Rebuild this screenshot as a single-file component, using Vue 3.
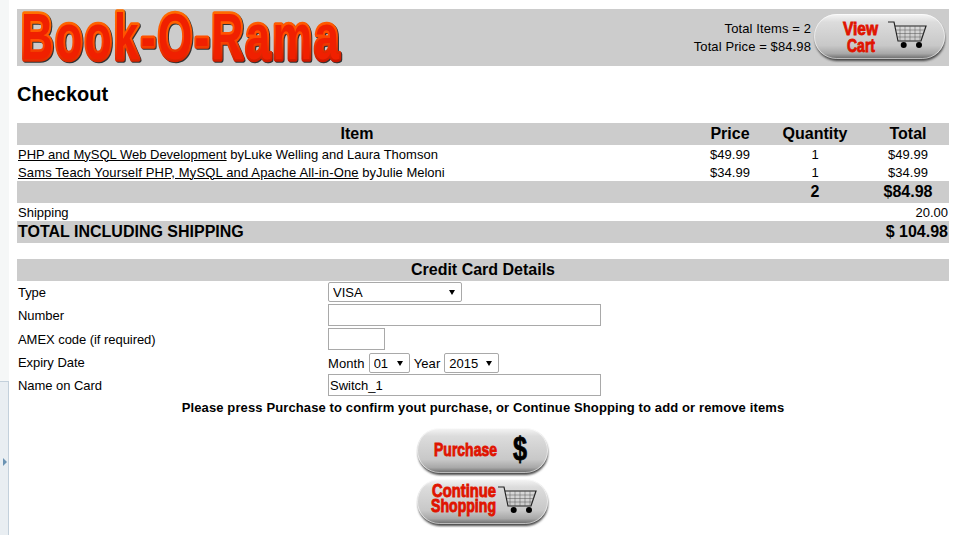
<script setup>
const items = [
  { title: "PHP and MySQL Web Development", author: "Luke Welling and Laura Thomson", price: "$49.99", qty: 1, total: "$49.99" },
  { title: "Sams Teach Yourself PHP, MySQL and Apache All-in-One", author: "Julie Meloni", price: "$34.99", qty: 1, total: "$34.99", wide: true },
];
</script>

<template>
  <div class="side-strip"><div class="side-panel"><span class="side-arrow"></span></div></div>

  <div class="page">
    <svg width="0" height="0" class="defs">
      <defs>
        <linearGradient id="pill" x1="0" y1="0" x2="0" y2="1">
          <stop offset="0" stop-color="#f6f6f6" />
          <stop offset="0.18" stop-color="#dcdcdc" />
          <stop offset="0.7" stop-color="#c8c8c8" />
          <stop offset="0.88" stop-color="#a8a8a8" />
          <stop offset="1" stop-color="#666" />
        </linearGradient>
        <linearGradient id="logoEdge" x1="0" y1="0" x2="0.15" y2="1">
          <stop offset="0" stop-color="#ff8000" />
          <stop offset="0.6" stop-color="#ff4c00" />
          <stop offset="1" stop-color="#c81000" />
        </linearGradient>
        <filter id="soft" x="-5%" y="-10%" width="110%" height="125%">
          <feGaussianBlur stdDeviation="1.2" />
        </filter>
        <g id="pillShape">
          <rect x="2" y="4" width="130" height="44" rx="22" fill="#444" filter="url(#soft)" />
          <rect x="1" y="1" width="131" height="45" rx="22.5" fill="url(#pill)" />
          <rect x="1.5" y="1.5" width="130" height="44" rx="22" fill="none" stroke="#fff" stroke-opacity="0.55" />
        </g>
        <g id="cart" fill="none" stroke="#222">
          <path d="M0 0H6L10 19H33L38 4H6.8" stroke-width="1.2" />
          <path d="M8 8H36.5M9 11.5H35.5M9.6 15H34.5M12 4V19M17 4V19M22 4V19M27 4V19M32 4V19" stroke-width="0.5" stroke="#555" />
          <circle cx="15.7" cy="23" r="3" fill="#000" stroke="none" />
          <circle cx="31" cy="23" r="3" fill="#000" stroke="none" />
        </g>
      </defs>
    </svg>

    <header class="banner">
      <svg class="logo" width="330" height="57" viewBox="0 0 330 57">
        <text class="logo-text" x="4" y="50" textLength="320" lengthAdjust="spacingAndGlyphs">Book-O-Rama</text>
      </svg>
      <div class="cart-summary">
        <div class="cart-count">
          Total Items = 2<br />
          Total Price = $84.98
        </div>
        <svg class="pill-btn" width="134" height="50" viewBox="0 0 134 50">
          <use href="#pillShape" />
          <text class="pill-label" x="30" y="22" font-size="19" textLength="35" lengthAdjust="spacingAndGlyphs">View</text>
          <text class="pill-label" x="34" y="39" font-size="19" textLength="28" lengthAdjust="spacingAndGlyphs">Cart</text>
          <use href="#cart" x="75" y="9" />
        </svg>
      </div>
    </header>

    <h2>Checkout</h2>

    <table class="order">
      <colgroup>
        <col class="col-item" />
        <col class="col-price" />
        <col class="col-qty" />
        <col class="col-total" />
      </colgroup>
      <thead>
        <tr class="band head">
          <th>Item</th>
          <th>Price</th>
          <th>Quantity</th>
          <th>Total</th>
        </tr>
      </thead>
      <tbody>
        <tr v-for="item in items" :key="item.title" class="line">
          <td><a href="#" :class="{ wide: item.wide }">{{ item.title }}</a> by{{ item.author }}</td>
          <td class="mid">{{ item.price }}</td>
          <td class="mid">{{ item.qty }}</td>
          <td class="mid">{{ item.total }}</td>
        </tr>
        <tr class="band head">
          <td></td>
          <td></td>
          <th>2</th>
          <th>$84.98</th>
        </tr>
        <tr class="line">
          <td>Shipping</td>
          <td></td>
          <td></td>
          <td class="end">20.00</td>
        </tr>
        <tr class="band head">
          <th class="start">TOTAL INCLUDING SHIPPING</th>
          <td></td>
          <td></td>
          <th class="end">$ 104.98</th>
        </tr>
      </tbody>
    </table>

    <form class="card" @submit.prevent>
      <div class="band card-title">Credit Card Details</div>
      <div class="card-row">
        <label>Type</label>
        <div><select class="type"><option>VISA</option></select></div>
      </div>
      <div class="card-row tall">
        <label>Number</label>
        <div><input class="long" type="text" /></div>
      </div>
      <div class="card-row tall">
        <label>AMEX code (if required)</label>
        <div><input class="short" type="text" /></div>
      </div>
      <div class="card-row">
        <label>Expiry Date</label>
        <div class="expiry">
          Month
          <select class="month"><option>01</option></select>
          Year
          <select class="year"><option>2015</option></select>
        </div>
      </div>
      <div class="card-row tall">
        <label>Name on Card</label>
        <div><input class="long" type="text" value="Switch_1" /></div>
      </div>
    </form>

    <p class="note">Please press Purchase to confirm yout purchase, or Continue Shopping to add or remove items</p>

    <div class="actions">
      <svg class="pill-btn" width="134" height="50" viewBox="0 0 134 50">
        <use href="#pillShape" />
        <text class="pill-label" x="18" y="29" font-size="19" textLength="63" lengthAdjust="spacingAndGlyphs">Purchase</text>
        <text class="dollar" x="97" y="33" font-size="33" textLength="14" lengthAdjust="spacingAndGlyphs">$</text>
      </svg>
      <svg class="pill-btn" width="134" height="50" viewBox="0 0 134 50">
        <use href="#pillShape" />
        <text class="pill-label" x="16" y="19" font-size="18" textLength="64" lengthAdjust="spacingAndGlyphs">Continue</text>
        <text class="pill-label" x="15" y="34" font-size="18" textLength="65" lengthAdjust="spacingAndGlyphs">Shopping</text>
        <use href="#cart" x="82" y="9" />
      </svg>
    </div>
  </div>
</template>

<style>
body {
  background: #fff;
}
</style>

<style scoped>
.page {
  width: 932px;
  margin-left: 17px;
  padding-top: 9px;
  font-family: "Liberation Sans", Arial, sans-serif;
  font-size: 13px;
  color: #000;
}

.defs {
  position: absolute;
}

.side-strip {
  position: absolute;
  left: 0;
  top: 0;
  width: 9px;
  height: 535px;
  background: #f5f7f7;
}

.side-panel {
  position: absolute;
  left: 0;
  right: 0;
  top: 381px;
  bottom: 0;
  background: #e9eef2;
  border-top: 1px solid #c3d0db;
  border-right: 1px solid #c3d0db;
}

.side-arrow {
  position: absolute;
  left: 3px;
  top: 76px;
  border-left: 4px solid #6b93b3;
  border-top: 4px solid transparent;
  border-bottom: 4px solid transparent;
}

.band {
  background: #ccc;
}

.banner {
  height: 57px;
  display: flex;
  justify-content: space-between;
  background: #ccc;
}

.logo {
  display: block;
}

.logo-text {
  font-family: "Liberation Sans", sans-serif;
  font-weight: 700;
  font-size: 65px;
  letter-spacing: 3px;
  fill: #f02000;
  stroke: url(#logoEdge);
  stroke-width: 5.5px;
  stroke-linejoin: round;
  paint-order: stroke;
  filter: drop-shadow(1.5px 1.5px 0.7px #333);
}

.cart-summary {
  display: flex;
  align-items: center;
  padding-right: 2px;
  gap: 2px;
}

.cart-count {
  text-align: right;
  line-height: 18px;
  letter-spacing: 0.1px;
}

.pill-btn {
  display: block;
}

.pill-label {
  font-family: "Liberation Sans", sans-serif;
  font-weight: 700;
  fill: #e01400;
  stroke: #e01400;
  stroke-width: 0.9px;
}

.dollar {
  font-family: "Liberation Sans", sans-serif;
  font-weight: 700;
  fill: #000;
  stroke: #000;
  stroke-width: 0.8px;
}

h2 {
  margin: 16px 0 17px;
  font-size: 20px;
  line-height: 24px;
  font-weight: 700;
}

.order {
  width: 932px;
  table-layout: fixed;
  border-collapse: collapse;
}

.col-item {
  width: 680px;
}

.col-price {
  width: 66px;
}

.col-qty {
  width: 104px;
}

.col-total {
  width: 82px;
}

.order th,
.order td {
  padding: 0 1px;
}

.head {
  height: 22px;
  font-size: 16px;
}

.line {
  height: 18px;
}

.mid {
  text-align: center;
}

.order .end {
  text-align: right;
}

.order .start {
  text-align: left;
}

a {
  color: inherit;
  text-decoration: underline;
}

a.wide {
  letter-spacing: 0.15px;
}

.card {
  margin-top: 16px;
}

.card-title {
  height: 22px;
  line-height: 22px;
  text-align: center;
  font-size: 16px;
  font-weight: 700;
}

.card-row {
  display: grid;
  grid-template-columns: 310px 1fr;
  align-items: center;
  height: 22px;
  padding-left: 1px;
}

.card-row.tall {
  height: 24px;
}

.card-row label {
  letter-spacing: -0.05px;
}

.card-row > div {
  display: flex;
  align-items: center;
  gap: 3px;
}

.card-row > .expiry {
  padding-top: 2px;
  gap: 4px;
  letter-spacing: 0.1px;
}

select,
input {
  box-sizing: border-box;
  font-family: "Liberation Sans", Arial, sans-serif;
  font-size: 13px;
  color: #000;
  border: 1px solid #a9a9a9;
  margin: 0;
}

input {
  height: 22px;
  padding: 1px;
  background: #fff;
}

select {
  appearance: none;
  height: 20px;
  padding: 0 0 0 4px;
  border-radius: 2px;
  background: #fff url("data:image/svg+xml,%3Csvg xmlns='http://www.w3.org/2000/svg' width='6' height='5'%3E%3Cpath d='M0 0H6L3 5Z' fill='%23000'/%3E%3C/svg%3E") no-repeat right 6px center;
}

.type {
  width: 134px;
}

.long {
  width: 273px;
}

.short {
  width: 57px;
}

.month {
  width: 41px;
}

.year {
  width: 55px;
}

.note {
  margin: 0;
  padding-top: 2px;
  line-height: 18px;
  text-align: center;
  font-weight: 700;
  letter-spacing: 0.12px;
}

.actions {
  display: flex;
  flex-direction: column;
  align-items: center;
  gap: 1px;
  margin-top: 10px;
}
</style>
